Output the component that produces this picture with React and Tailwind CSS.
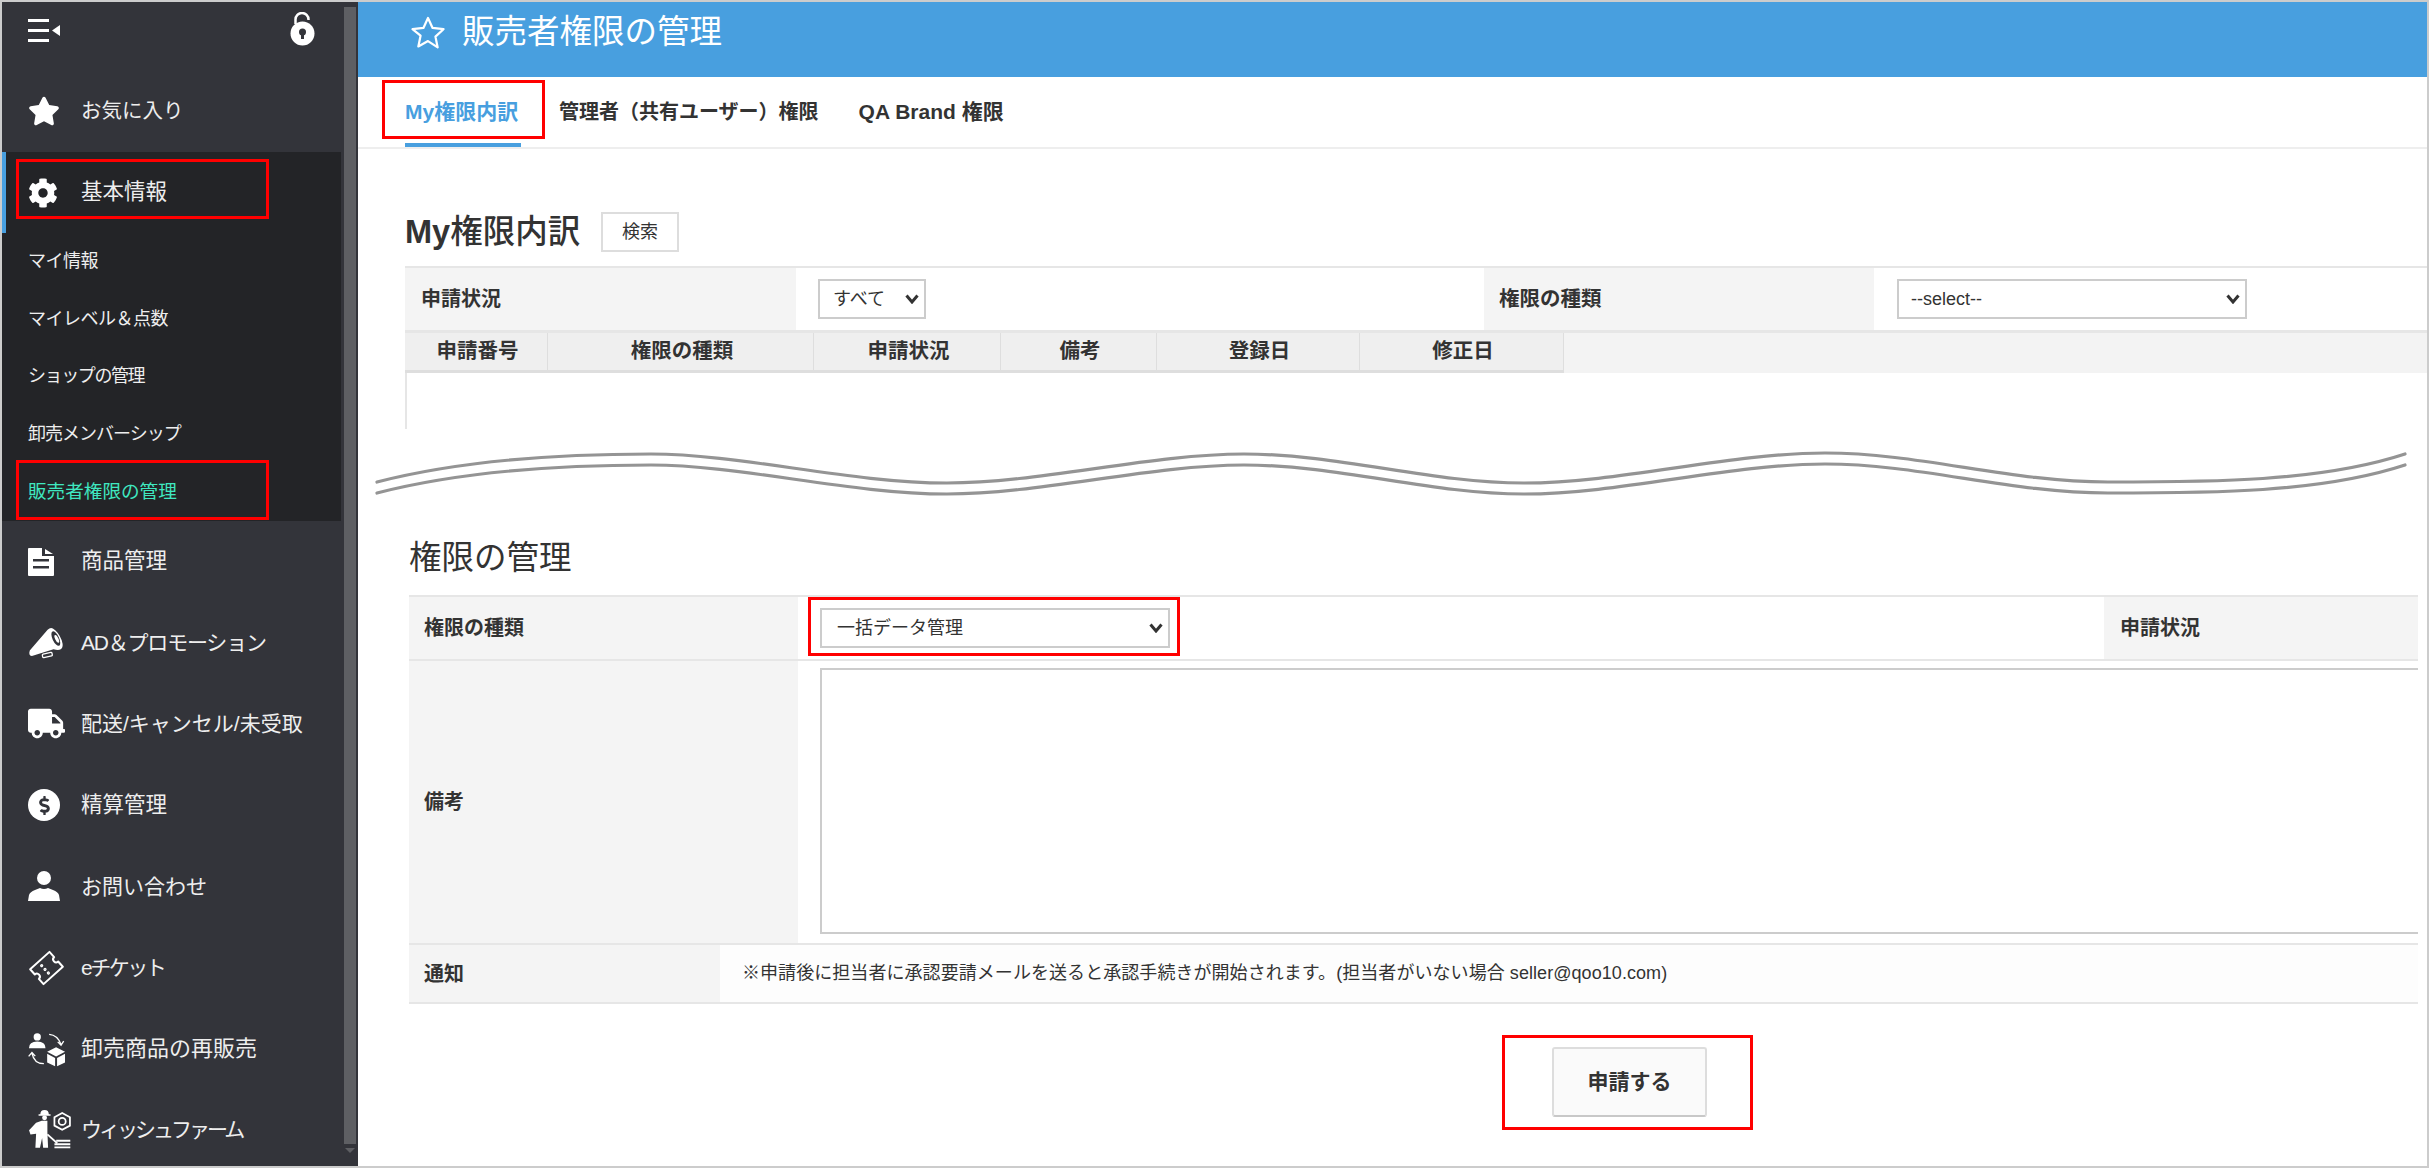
import React from 'react';
import { FaStar, FaCog, FaTruck, FaDollarSign } from 'react-icons/fa';

const font = { fontFamily: '"Liberation Sans", "Noto Sans CJK JP", sans-serif' };

function MenuIcon() {
  return (
    <svg width="32" height="23" viewBox="0 0 32 23" fill="#fff">
      <rect x="0" y="0" width="21" height="3" />
      <rect x="0" y="10" width="21" height="3" />
      <rect x="0" y="20" width="21" height="3" />
      <path d="M32 6v11l-8-5.500z" />
    </svg>
  );
}

function LockIcon() {
  return (
    <svg width="25" height="34" viewBox="0 0 25 34">
      <path d="M5.500 12V7.500a6.500 6.500 0 0 1 13 0V8" fill="none" stroke="#fff" strokeWidth="2.500" />
      <circle cx="12.500" cy="21.500" r="12" fill="#fff" />
      <circle cx="12.500" cy="20" r="3.500" fill="#33343a" />
      <rect x="11" y="21" width="3" height="6" fill="#33343a" />
    </svg>
  );
}

function FileIcon() {
  return (
    <svg width="26" height="28" viewBox="0 0 26 28">
      <path d="M1 0h13v8h12v19a1 1 0 0 1-1 1H1a1 1 0 0 1-1-1V1a1 1 0 0 1 1-1z" fill="#fff" />
      <path d="M17 1l8 5h-8z" fill="#fff" />
      <rect x="5" y="11" width="16" height="2.500" fill="#33343a" />
      <rect x="5" y="18" width="16" height="2.500" fill="#33343a" />
    </svg>
  );
}

function HornIcon() {
  return (
    <svg width="36" height="33" viewBox="32 18 110 98">
      <path d="M36 98Q36 90 42 86L92 28Q100 20 108 24Q125 34 135 60Q142 82 132 88Q125 92 110 88L44 108Q36 108 36 98Z" fill="#fff" />
      <ellipse cx="117" cy="55" rx="10" ry="24" transform="rotate(-25 117 55)" fill="#33343a" />
      <ellipse cx="120" cy="56" rx="5" ry="13" transform="rotate(-25 120 56)" fill="#fff" />
      <rect x="76" y="100" width="30" height="11" rx="3" transform="rotate(-12 90 105)" fill="none" stroke="#fff" strokeWidth="4" />
    </svg>
  );
}

function UserIcon() {
  return (
    <svg width="32" height="30" viewBox="0 0 32 30" fill="#fff">
      <circle cx="16" cy="7" r="7" />
      <path d="M0 30l1-6q1-3 6-5l5-2q4 2 8 0l5 2q5 2 6 5l1 6z" />
    </svg>
  );
}

function TicketIcon() {
  return (
    <svg width="37" height="36" viewBox="0 0 36 36">
      <g transform="rotate(-42 18 18)" fill="none" stroke="#fff" strokeWidth="2">
        <path d="M5 8H31V15A3 3 0 0 0 31 21V28H5V21A3 3 0 0 0 5 15Z" strokeLinejoin="round" />
        <circle cx="16" cy="13" r=".6" fill="#fff" />
        <circle cx="16" cy="18" r=".6" fill="#fff" />
        <circle cx="16" cy="23" r=".6" fill="#fff" />
      </g>
    </svg>
  );
}

function ResaleIcon() {
  return (
    <svg width="38" height="44" viewBox="30 270 115 115">
      <circle cx="58" cy="291" r="11" fill="#fff" />
      <path d="M33 325Q33 305 58 305Q83 305 83 325Z" fill="#fff" />
      <path d="M94 283Q120 285 130 314M120 306l10 10 8-12" fill="none" stroke="#fff" strokeWidth="4" />
      <path d="M78 372Q48 372 42 340M32 350l10-12 10 11" fill="none" stroke="#fff" strokeWidth="4" />
      <path d="M115 322l27 14-27 14-27-14zM88 342l24 13v25l-24-12zM142 342l-24 13v25l24-12z" fill="#fff" />
    </svg>
  );
}

function FarmIcon() {
  return (
    <svg width="43" height="45" viewBox="25 515 122 112">
      <path d="M60 528q0-12 12-12t12 12h5v4H55v-4z" fill="#fff" />
      <circle cx="72" cy="538" r="7" fill="#fff" />
      <path d="M48 552l16-6h16v32l2 45H68l-3-28-6 28H46l2-40-16 2-4-12z" fill="#fff" />
      <path d="M80 585l28 25" stroke="#fff" strokeWidth="5" />
      <path d="M122 524l22 12v24l-22 12-22-12v-24z" fill="none" stroke="#fff" strokeWidth="5" />
      <circle cx="122" cy="548" r="10" fill="none" stroke="#fff" strokeWidth="5" />
      <path d="M105 600h40v6h-40zM100 610h45v6h-45zM100 619h45v5h-45z" fill="#fff" />
    </svg>
  );
}

function RedBox({ className }) {
  return <div className={'absolute border-[3px] border-[#f00] pointer-events-none ' + className} />;
}

function Select({ w, pad, option }) {
  return (
    <div className={'relative h-[40px] ' + w}>
      <select defaultValue="a" className={'appearance-none w-full h-full border-2 border-[#cccccc] bg-white text-[18px] text-[#333] ' + pad}>
        <option value="a">{option}</option>
      </select>
      <svg className="absolute right-[7px] top-[15px] pointer-events-none" width="14" height="10" viewBox="0 0 14 10" fill="none" stroke="#333" strokeWidth="3">
        <path d="M1.500 1.500L7 8l5.500-6.500" />
      </svg>
    </div>
  );
}

function MainItem({ icon, label, h, text = 'text-[21px]' }) {
  return (
    <div className={'flex items-center pl-[26px] text-[#eeeeee] ' + text + ' ' + h}>
      <div className="w-[53px] flex items-center shrink-0">{icon}</div>
      <span className="whitespace-nowrap">{label}</span>
    </div>
  );
}

function Sidebar() {
  const subs = [
    ['マイ情報', 'tracking-[-0.500px]'],
    ['マイレベル＆点数', 'tracking-[-0.500px]'],
    ['ショップの管理', 'tracking-[-1.400px]'],
    ['卸売メンバーシップ', 'tracking-[-1px]'],
  ];
  return (
    <aside className="w-[356px] h-full flex shrink-0 bg-[#33343a] overflow-hidden">
      <div className="w-[339px] shrink-0">
        <div className="h-[68px] flex items-start justify-between pl-[26px] pr-[26px]">
          <div className="mt-[17px]"><MenuIcon /></div>
          <div className="mt-[10px]"><LockIcon /></div>
        </div>
        <MainItem h="h-[82px]" text="text-[20.500px]" icon={<FaStar size={32} color="#fff" />} label="お気に入り" />
        <div className="bg-[#232427]">
          <div className="relative h-[81px] flex items-center pl-[22px] border-l-4 border-[#489fdf] text-[21.500px] text-[#eeeeee]">
            <div className="w-[53px] flex items-center shrink-0"><FaCog size={30} color="#fff" /></div>
            <span>基本情報</span>
            <RedBox className="left-[10px] top-[7px] w-[253px] h-[60px]" />
          </div>
          {subs.map(([s, t]) => (
            <div key={s} className={'h-[57.500px] flex items-center pl-[26px] text-[18px] text-[#eeeeee] whitespace-nowrap ' + t}>{s}</div>
          ))}
          <div className="relative h-[58px] flex items-center pl-[26px] text-[18.600px] text-[#3fe8c0]">
            販売者権限の管理
            <RedBox className="left-[14px] top-[-3px] w-[253px] h-[60px]" />
          </div>
        </div>
        <MainItem h="h-[81.200px]" text="text-[21.500px]" icon={<FileIcon />} label="商品管理" />
        <MainItem h="h-[81.200px]" text="text-[21px] tracking-[-1.200px]" icon={<HornIcon />} label="AD＆プロモーション" />
        <MainItem h="h-[81.200px]" text="text-[21px]" icon={<FaTruck size={37} color="#fff" />} label="配送/キャンセル/未受取" />
        <MainItem h="h-[81.200px]" text="text-[21.500px]" icon={
          <div className="w-[32px] h-[32px] rounded-full bg-white flex items-center justify-center">
            <FaDollarSign size={19} color="#33343a" />
          </div>
        } label="精算管理" />
        <MainItem h="h-[81.200px]" icon={<UserIcon />} label="お問い合わせ" />
        <MainItem h="h-[81.200px]" text="text-[21px] tracking-[-2.500px]" icon={<TicketIcon />} label="eチケット" />
        <MainItem h="h-[81.200px]" text="text-[22px]" icon={<ResaleIcon />} label="卸売商品の再販売" />
        <MainItem h="h-[81.200px]" text="text-[21px] tracking-[-3px]" icon={<FarmIcon />} label="ウィッシュファーム" />
      </div>
      <div className="ml-[3px] w-[12px] shrink-0 flex flex-col items-center">
        <div className="mt-[5px] w-full h-[1137px] bg-[#5e5f63]" />
        <div className="mt-[4px] w-0 h-0 border-x-[5px] border-x-transparent border-t-[5px] border-t-[#5e5f63]" />
      </div>
    </aside>
  );
}

function Wave() {
  const d = 'M377 482C470 458 580 454 651 454C740 454 850 483 947 483C1040 483 1150 454 1244 454C1340 454 1430 483 1524 483C1620 483 1730 453 1825 453C1920 453 2010 482 2108 482C2210 482 2320 482 2405 454';
  return (
    <svg className="block mt-[11px]" width="2069" height="70" viewBox="358 440 2069 70" fill="none" stroke="#949494" strokeWidth="3.200" strokeLinecap="round">
      <path d={d} />
      <path d={d} transform="translate(0 11)" />
    </svg>
  );
}

function History() {
  const cols = [
    ['申請番号', 'w-[143px]'],
    ['権限の種類', 'w-[266px]'],
    ['申請状況', 'w-[187px]'],
    ['備考', 'w-[156px]'],
    ['登録日', 'w-[203px]'],
    ['修正日', 'w-[204px]'],
  ];
  return (
    <div className="ml-[47px]">
      <div className="mt-[63px] flex items-center h-[40px]">
        <h2 className="w-[196px] text-[32.500px] font-medium text-[#333] whitespace-nowrap"><span className="font-bold">My</span>権限内訳</h2>
        <button className="w-[78px] h-[40px] border-2 border-[#dddddd] bg-white text-[18px] text-[#333]">検索</button>
      </div>
      <div className="mt-[14px] h-[67px] flex border-t-2 border-b-[3px] border-[#e6e6e6]">
        <div className="w-[391px] bg-[#f4f4f4] flex items-center pl-[16px] text-[20px] font-bold text-[#333]">申請状況</div>
        <div className="w-[688px] flex items-center pl-[22px]">
          <Select w="w-[108px]" pad="pl-[13px]" option="すべて" />
        </div>
        <div className="w-[390px] bg-[#f4f4f4] flex items-center pl-[15px] text-[20.500px] font-bold text-[#333]">権限の種類</div>
        <div className="flex-1 flex items-center pl-[23px]">
          <Select w="w-[350px]" pad="pl-[12px]" option="--select--" />
        </div>
      </div>
      <div className="h-[40px] flex bg-[#f3f3f3]">
        {cols.map(([label, w]) => (
          <div key={label} className={'flex items-center justify-center pl-[3px] bg-[#efefef] border-r border-b-[3px] border-[#dedede] text-[20.500px] font-bold text-[#333] ' + w}>{label}</div>
        ))}
      </div>
      <div className="h-[56px] border-l-2 border-[#e6e6e6]" />
    </div>
  );
}

function RequestForm() {
  return (
    <div className="ml-[51px] mr-[9px]">
      <h2 className="mt-[33px] h-[30px] flex items-center text-[32.500px] text-[#333] whitespace-nowrap">権限の管理</h2>
      <div className="mt-[22px] h-[66px] flex border-y-2 border-[#e6e6e6]">
        <div className="w-[389px] bg-[#f4f4f4] flex items-center pl-[15px] text-[20px] font-bold text-[#333]">権限の種類</div>
        <div className="relative flex-1 flex items-center pl-[22px]">
          <Select w="w-[350px]" pad="pl-[15px]" option="一括データ管理" />
          <RedBox className="left-[10px] top-0 w-[372px] h-[59px]" />
        </div>
        <div className="w-[314px] bg-[#f4f4f4] flex items-center pl-[16px] text-[20px] font-bold text-[#333]">申請状況</div>
      </div>
      <div className="h-[284px] flex border-b-2 border-[#e6e6e6] overflow-hidden">
        <div className="w-[389px] shrink-0 bg-[#f4f4f4] flex items-center pl-[15px] text-[20px] font-bold text-[#333]">備考</div>
        <div className="pl-[22px] pt-[7px]">
          <textarea className="block w-[1640px] h-[266px] border-2 border-[#cccccc] bg-white resize-none" />
        </div>
      </div>
      <div className="h-[59px] flex border-b-2 border-[#e6e6e6]">
        <div className="w-[311px] bg-[#f4f4f4] flex items-center pl-[15px] text-[20px] font-bold text-[#333]">通知</div>
        <div className="flex-1 bg-[#fdfdfd] flex items-center pl-[22px] text-[18px] tracking-[0.060px] text-[#333] whitespace-nowrap">
          ※申請後に担当者に承認要請メールを送ると承認手続きが開始されます。(担当者がいない場合 seller@qoo10.com)
        </div>
      </div>
      <div className="relative mt-[43px] ml-[1143px] w-[155px] h-[70px]">
        <button className="w-full h-full rounded-[3px] border-2 border-[#dddddd] border-b-[#c8c8c8] bg-[#fafafa] text-[21px] font-bold text-[#333]">申請する</button>
        <RedBox className="left-[-50px] top-[-12px] w-[251px] h-[95px]" />
      </div>
    </div>
  );
}

export default function App() {
  return (
    <div className="w-[2429px] h-[1168px] flex bg-white border-2 border-[#cccccc] overflow-hidden" style={font}>
      <Sidebar />
      <main className="flex-1 min-w-0 overflow-hidden bg-white">
        <div className="h-[75px] bg-[#489fdf] flex items-start pl-[50px] gap-[14px]">
          <svg className="mt-[12px]" width="40" height="38" viewBox="0 0 24 24" fill="none" stroke="#fff" strokeWidth="1.400" strokeLinejoin="round">
            <path d="M12 2.500l2.900 6.300 6.900.8-5.100 4.700 1.400 6.800L12 17.100l-6.100 3.400 1.400-6.800L2.200 9.600l6.900-.8z" />
          </svg>
          <h1 className="h-[60px] flex items-center text-[32.500px] leading-none text-white whitespace-nowrap">販売者権限の管理</h1>
        </div>
        <div className="relative h-[72px] flex pl-[47px] gap-[38px] border-b-2 border-[#eeeeee] text-[20px] font-bold whitespace-nowrap">
          <div className="w-[116px] h-[70px] flex items-center pt-[4px] border-b-4 border-[#489fdf] text-[21px] text-[#489fdf]">My権限内訳</div>
          <div className="h-[70px] flex items-center text-[#333]">管理者（共有ユーザー）権限</div>
          <div className="ml-[2px] h-[70px] flex items-center text-[21px] text-[#333]">QA Brand 権限</div>
          <RedBox className="left-[24px] top-[3px] w-[163px] h-[59px]" />
        </div>
        <History />
        <Wave />
        <RequestForm />
      </main>
    </div>
  );
}
